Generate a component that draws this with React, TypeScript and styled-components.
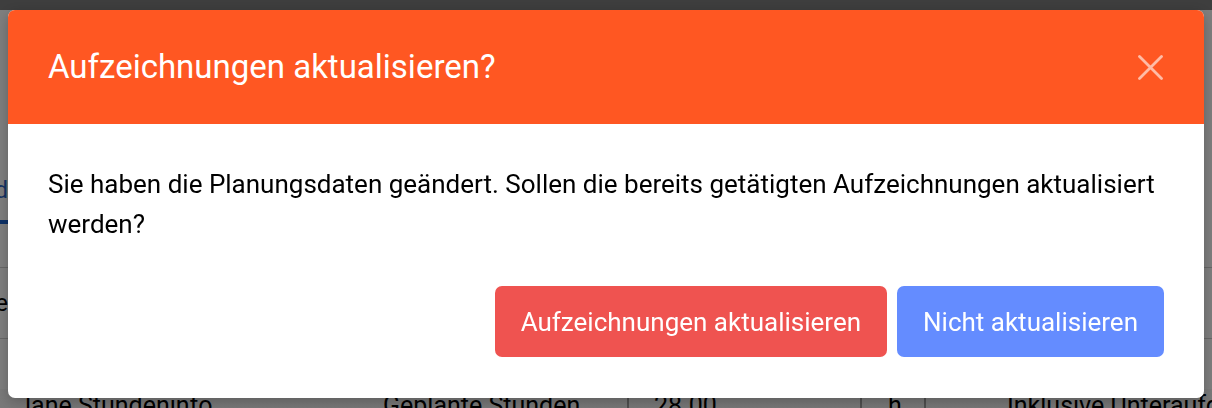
import styled, { createGlobalStyle } from "styled-components";

const GlobalStyle = createGlobalStyle`
  html, body {
    margin: 0;
    padding: 0;
    width: 1212px;
    height: 408px;
    overflow: hidden;
    background: #ffffff;
    font-family: Roboto, "Liberation Sans", Arial, sans-serif;
  }
`;

export default function App() {
  return (
    <>
      <GlobalStyle />
      {/* page underneath the dialog */}
      <Page>
        <TopBar />
        <TabRow>
          <TabCut>
            <TabLabel>Aufzeichnungen Stand</TabLabel>
          </TabCut>
        </TabRow>
        <FieldRow>
          <TabCut>
            <FieldLabel>Tätigkeitstyp Leistungsbereiche</FieldLabel>
          </TabCut>
        </FieldRow>
        <TableRow>
          <Cell $width={370}>
            <CellText $indent={25}>lane Stundeninfo</CellText>
          </Cell>
          <Cell $width={257}>
            <CellText $indent={13}>Geplante Stunden</CellText>
          </Cell>
          <Cell $width={233} $divider>
            <CellText $indent={25}>28.00</CellText>
          </Cell>
          <Cell $width={64} $divider>
            <CellText $indent={26}>h</CellText>
          </Cell>
          <Cell $width={288} $divider>
            <CellText $indent={81}>Inklusive Unteraufgaben</CellText>
          </Cell>
        </TableRow>
      </Page>

      <Backdrop>
        <Dialog role="dialog" aria-modal="true">
          <Header>
            <Title>Aufzeichnungen aktualisieren?</Title>
            <CloseButton aria-label="Schließen">
              <svg width="25" height="25" viewBox="0 0 25 25" fill="none">
                <path
                  d="M1.5 1.5L23.5 23.5M23.5 1.5L1.5 23.5"
                  stroke="currentColor"
                  strokeWidth="2.8"
                  strokeLinecap="round"
                />
              </svg>
            </CloseButton>
          </Header>
          <Body>
            <Message>
              Sie haben die Planungsdaten geändert. Sollen die bereits
              getätigten Aufzeichnungen aktualisiert werden?
            </Message>
            <Actions>
              <ActionButton $variant="danger">
                Aufzeichnungen aktualisieren
              </ActionButton>
              <ActionButton $variant="primary">Nicht aktualisieren</ActionButton>
            </Actions>
          </Body>
        </Dialog>
      </Backdrop>
    </>
  );
}

const Page = styled.div`
  width: 1212px;
  height: 408px;
  display: flex;
  flex-direction: column;
  background: #ffffff;
  overflow: hidden;
`;

const TopBar = styled.div`
  height: 10px;
  flex-shrink: 0;
  background: #7c7c7c;
`;

const TabRow = styled.div`
  height: 60px;
  margin-top: 150px;
  flex-shrink: 0;
  display: flex;
  align-items: center;
  border-bottom: 4px solid #1b63cf;
  width: 10px;
`;

const TabCut = styled.div`
  width: 8px;
  display: flex;
  justify-content: flex-end;
  white-space: nowrap;
`;

const TabLabel = styled.span`
  font-size: 24px;
  color: #2a66c8;
`;

const FieldRow = styled.div`
  height: 70px;
  margin-top: 43px;
  flex-shrink: 0;
  display: flex;
  align-items: center;
  border-top: 1px solid #cfcfcf;
  border-bottom: 1px solid #cfcfcf;
`;

const FieldLabel = styled.span`
  font-size: 24px;
  color: #000;
`;

const TableRow = styled.div`
  margin-top: 50px;
  height: 60px;
  flex-shrink: 0;
  display: flex;
  background: linear-gradient(#f6f6f6, #e8e8e8);
`;

const Cell = styled.div<{ $width: number; $divider?: boolean }>`
  width: ${(p) => p.$width}px;
  flex-shrink: 0;
  box-sizing: border-box;
  border-left: ${(p) => (p.$divider ? "2px solid #a0a0a0" : "none")};
  padding-top: 2px;
  white-space: nowrap;
  overflow: hidden;
`;

const CellText = styled.span<{ $indent: number }>`
  display: block;
  padding-left: ${(p) => p.$indent}px;
  font-size: 25px;
  color: #000;
`;

const Backdrop = styled.div`
  position: fixed;
  inset: 0;
  background: rgba(0, 0, 0, 0.5);
  display: flex;
  justify-content: center;
  align-items: flex-start;
  padding-top: 10px;
`;

const Dialog = styled.div`
  width: 1196px;
  background: #ffffff;
  border-radius: 7px;
  overflow: hidden;
  box-shadow: 0 4px 14px rgba(0, 0, 0, 0.25);
`;

const Header = styled.div`
  height: 114px;
  background: #ff5722;
  display: flex;
  align-items: center;
  justify-content: space-between;
  padding: 0 40px;
  box-sizing: border-box;
`;

const Title = styled.h2`
  margin: 0;
  font-size: 33px;
  font-weight: 400;
  color: #ffffff;
  padding-bottom: 2px;
`;

const CloseButton = styled.button`
  border: 0;
  background: none;
  padding: 0;
  margin-right: 1px;
  display: flex;
  color: rgba(255, 255, 255, 0.6);
  cursor: pointer;
`;

const Body = styled.div`
  padding: 40px 40px 41px;
  display: flex;
  flex-direction: column;
  gap: 42px;
`;

const Message = styled.p`
  margin: 0;
  font-size: 26px;
  line-height: 40px;
  color: #000000;
`;

const Actions = styled.div`
  display: flex;
  justify-content: flex-end;
  gap: 10px;
`;

const ActionButton = styled.button<{ $variant: "danger" | "primary" }>`
  height: 71px;
  padding: 0 26px;
  border: 0;
  border-radius: 7px;
  font-family: Roboto, "Liberation Sans", Arial, sans-serif;
  font-size: 26px;
  color: #ffffff;
  background: ${(p) => (p.$variant === "danger" ? "#ef5350" : "#648cff")};
  cursor: pointer;
`;
